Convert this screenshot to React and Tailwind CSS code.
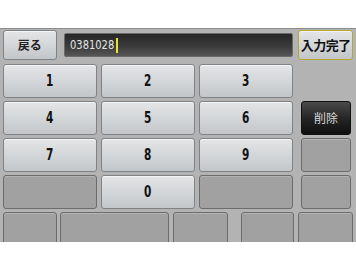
export default function App() {
  const keys = [
    ["1", "2", "3", null],
    ["4", "5", "6", "del"],
    ["7", "8", "9", "off"],
    ["off", "0", "off", "off"],
  ];

  const light =
    "flex items-center justify-center rounded-[3px] border border-[#808386] bg-[linear-gradient(180deg,#e3e5e6_0%,#d2d5d7_55%,#c3c6c9_100%)] shadow-[inset_0_1px_0_#f4f5f6] text-[#111]";
  const off =
    "rounded-[3px] border border-[#6c6c6c] bg-[#a1a1a1] shadow-[inset_0_1px_0_#b4b4b4]";
  const jp = " font-['Noto_Sans_CJK_JP',sans-serif] font-bold";

  return (
    <div className="h-[267px] w-[356px] bg-white font-['DejaVu_Sans_Condensed','Noto_Sans_CJK_JP',sans-serif]">
      <div className="h-[28px]" />
      <div className="flex h-[214px] flex-col border-t border-[#8d8d8d] bg-[#b3b3b3] px-[3px]">
        <div className="mt-[1px] flex h-[30px] items-center">
          <div className={light + jp + " h-[30px] w-[54px] text-[12px] text-[#222]"}>戻る</div>
          <div className="ml-[7px] flex h-[24px] w-[231px] items-center rounded-[2px] border border-[#6a6a6a] bg-[linear-gradient(180deg,#262626_0%,#3d3d3d_60%,#565656_100%)] pl-[5px] text-[#e6e6e6]">
            <span className="inline-block origin-left scale-x-[0.85] text-[13px]">0381028</span>
            <span className="-ml-[6px] h-[15px] w-[2px] bg-[#e6e03a]" />
          </div>
          <div className={light + jp + " ml-[5px] h-[30px] w-[55px] border-[#b5a830] shadow-[inset_0_0_0_1px_#e8de6a] text-[13px] tracking-[-0.6px]"}>入力完了</div>
        </div>
        <div className="mt-[4px] grid grid-cols-[94px_94px_94px_54px] grid-rows-[34px_34px_34px_34px] gap-x-[4px] gap-y-[3px]">
          {keys.flat().map((k, i) => {
            const col4 = i % 4 === 3 ? " ml-[4px]" : "";
            if (k === null) return <div key={i} />;
            if (k === "off") return <div key={i} className={off + col4} />;
            if (k === "del")
              return (
                <div
                  key={i}
                  className={
                    "flex items-center justify-center rounded-[3px] border border-[#111] bg-[linear-gradient(180deg,#4a4a4a_0%,#262626_50%,#0e0e0e_100%)] text-[12px] text-[#d8d8d8] font-['Noto_Sans_CJK_JP',sans-serif]" +
                    col4
                  }
                >
                  削除
                </div>
              );
            return (
              <div key={i} className={light + col4}>
                <span className="inline-block scale-x-[0.78] text-[15px] font-bold">{k}</span>
              </div>
            );
          })}
        </div>
        <div className="mt-[3px] flex h-[30px] overflow-hidden">
          <div className={off + " h-[34px] w-[54px]"} />
          <div className={off + " ml-[3px] h-[34px] w-[110px]"} />
          <div className={off + " ml-[4px] h-[34px] w-[55px]"} />
          <div className={off + " ml-[13px] h-[34px] w-[54px]"} />
          <div className={off + " ml-[4px] h-[34px] w-[55px]"} />
        </div>
      </div>
    </div>
  );
}
